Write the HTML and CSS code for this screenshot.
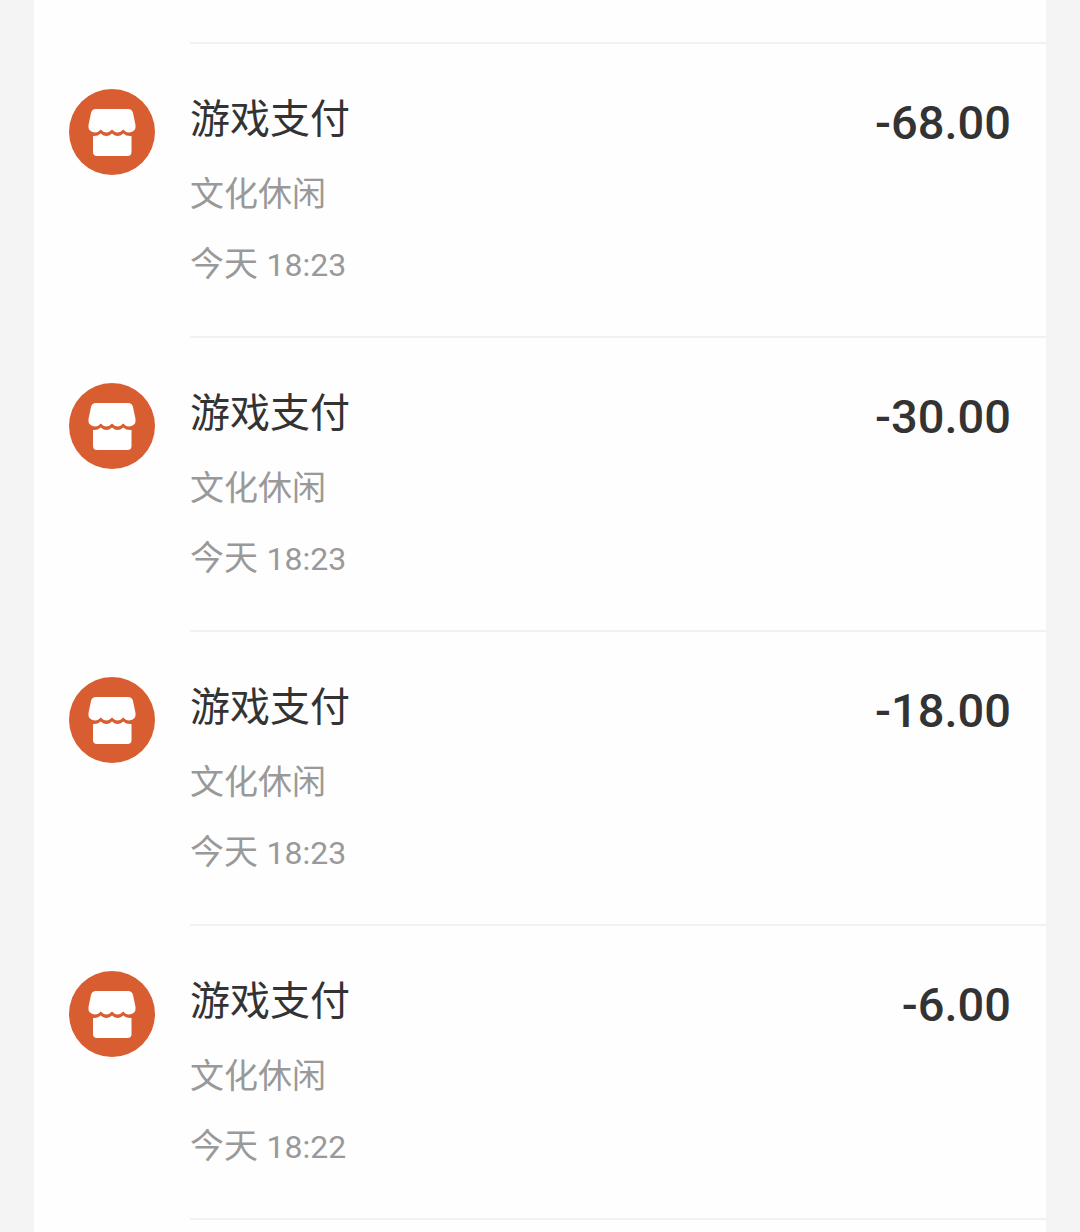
FILE: index.html
```html
<!DOCTYPE html>
<html lang="zh-CN">
<head>
<meta charset="utf-8">
<meta name="viewport" content="width=device-width, initial-scale=1">
<title>账单</title>
<link rel="stylesheet" href="styles.css">
</head>
<body>
<svg class="sprite" aria-hidden="true">
  <symbol id="shop" viewBox="0 0 86 86">
    <circle cx="43" cy="43" r="43" fill="#d85e32"/>
    <path fill="#fff" d="M27 20H59Q63 20 64 24L66.500 36Q67.500 43 60 43.500Q56.500 43.500 54.300 40.500Q48.500 46.500 43 40.500Q37.500 46.500 31.700 40.500Q29.500 43.500 26 43.500Q18.500 43 19.500 36L22 24Q23 20 27 20Z"/>
    <path fill="#fff" d="M24 47Q28.500 47.500 31.700 44.500Q37.500 49.500 43 44.500Q48.500 49.500 54.300 44.500Q57.500 47.500 62.500 47V63Q62.500 67 58.500 67H28Q24 67 24 63Z"/>
  </symbol>
</svg>
<main class="card">
  <ul class="bills">
    <li class="bill">
      <svg class="bill-icon" aria-hidden="true"><use href="#shop"/></svg>
      <div class="bill-body">
        <div class="bill-info">
          <h2 class="bill-title">游戏支付</h2>
          <p class="bill-note">文化休闲</p>
          <p class="bill-note">今天 <time class="bill-time">18:23</time></p>
        </div>
        <span class="bill-amount">-68.00</span>
      </div>
    </li>
    <li class="bill">
      <svg class="bill-icon" aria-hidden="true"><use href="#shop"/></svg>
      <div class="bill-body">
        <div class="bill-info">
          <h2 class="bill-title">游戏支付</h2>
          <p class="bill-note">文化休闲</p>
          <p class="bill-note">今天 <time class="bill-time">18:23</time></p>
        </div>
        <span class="bill-amount">-30.00</span>
      </div>
    </li>
    <li class="bill">
      <svg class="bill-icon" aria-hidden="true"><use href="#shop"/></svg>
      <div class="bill-body">
        <div class="bill-info">
          <h2 class="bill-title">游戏支付</h2>
          <p class="bill-note">文化休闲</p>
          <p class="bill-note">今天 <time class="bill-time">18:23</time></p>
        </div>
        <span class="bill-amount">-18.00</span>
      </div>
    </li>
    <li class="bill">
      <svg class="bill-icon" aria-hidden="true"><use href="#shop"/></svg>
      <div class="bill-body">
        <div class="bill-info">
          <h2 class="bill-title">游戏支付</h2>
          <p class="bill-note">文化休闲</p>
          <p class="bill-note">今天 <time class="bill-time">18:22</time></p>
        </div>
        <span class="bill-amount">-6.00</span>
      </div>
    </li>
  </ul>
</main>
</body>
</html>
```
FILE: styles.css
```css
* {
  box-sizing: border-box;
}

body {
  margin: 0;
  background: #f4f4f4;
  color: #333;
  font-family: Roboto, "Noto Sans CJK SC", sans-serif;
}

.sprite {
  display: none;
}

.card {
  min-height: 100vh;
  margin: 0 34px;
  padding-top: 42px;
  background: #fefefe;
}

.bills {
  margin: 0;
  padding: 0;
  list-style: none;
}

.bill {
  display: flex;
  gap: 35px;
  padding-left: 35px;
}

.bill-icon {
  flex: none;
  width: 86px;
  height: 86px;
  margin-top: 47px;
}

.bill-body {
  display: flex;
  flex: 1;
  justify-content: space-between;
  padding: 48px 35px 48px 0;
  border-top: 2px solid #f1f1f1;
}

/* Closes the list with the same inset rule */
.bills::after {
  content: "";
  display: block;
  margin-left: 156px;
  border-top: 2px solid #f1f1f1;
}

.bill-info {
  display: flex;
  flex-direction: column;
  gap: 22px;
}

.bill-title {
  margin: 0;
  font-size: 40px;
  font-weight: 400;
  line-height: 56px;
}

.bill-note {
  margin: 0;
  color: #999;
  font-size: 34px;
  line-height: 48px;
}

.bill-time {
  font-size: 32px;
  line-height: 32px;
}

.bill-amount {
  font-size: 47px;
  font-weight: 500;
  line-height: 62px;
}
```
